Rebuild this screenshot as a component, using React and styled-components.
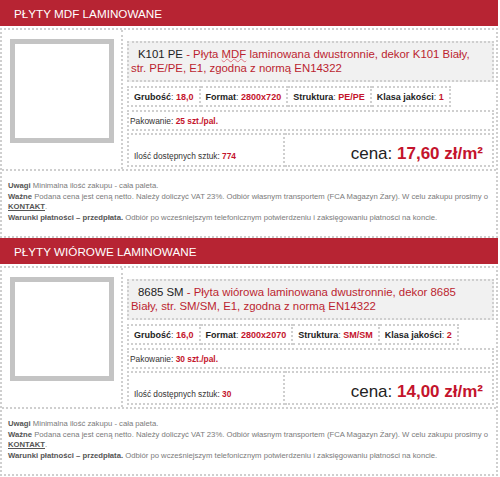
import styled, { createGlobalStyle } from 'styled-components';

const RED = '#b72433';
const VALUE_RED = '#c4142c';
const DOTS = '2px dotted #cfcfcf';

const GlobalStyle = createGlobalStyle`
	body {
		margin: 0;
		background: #fff;
		font-family: "Liberation Sans", Arial, sans-serif;
	}
	* {
		box-sizing: border-box;
	}
`;

const Page = styled.div`
	width: 498px;
`;

const Header = styled.div`
	height: 26px;
	display: flex;
	align-items: center;
	padding: 1px 0 0 14px;
	background: ${RED};
	color: #fff;
	font-size: 11.7px;
`;

const Panel = styled.div`
	margin-top: 2px;
	border: ${DOTS};
`;

const ProductRow = styled.div`
	display: flex;
	height: 141px;
	border-bottom: ${DOTS};
`;

const ImageCell = styled.div`
	width: 121px;
	padding: 9px 0 0 8px;
	border-right: ${DOTS};
`;

const ImageFrame = styled.div`
	width: 104px;
	height: 104px;
	border: 5px solid #c4c4c4;
	background: #fff;
`;

const InfoCell = styled.div`
	flex: 1;
	display: flex;
	flex-direction: column;
	padding: 11px 2px 0 4px;
`;

const TitleBox = styled.div`
	height: 41px;
	padding: 5px 6px 0 2px;
	border: ${DOTS};
	background: #f1f1f1;
	font-size: 11.4px;
	line-height: 13.5px;
	text-indent: 7px;
	color: #bb1f30;
`;

const Code = styled.span`
	color: #222;
`;

const Squiggle = styled.span`
	text-decoration-line: underline;
	text-decoration-style: wavy;
	text-decoration-color: #e27382;
	text-decoration-thickness: 1px;
	text-underline-offset: 0;
`;

const SpecsRow = styled.div`
	display: flex;
	height: 21px;
	margin-top: 4px;
`;

const SpecCell = styled.div`
	display: flex;
	align-items: center;
	padding: 0 5px;
	border: ${DOTS};
	font-size: 9px;
	color: #222;

	& + & {
		border-left: none;
	}
`;

const Label = styled.b`
	font-weight: bold;
`;

const Colon = styled.span`
	color: #555;
	white-space: pre;
`;

const Value = styled.b`
	font-weight: bold;
	color: ${VALUE_RED};
`;

const PackRow = styled.div`
	display: flex;
	align-items: center;
	height: 21px;
	margin-top: 3px;
	padding-left: 1px;
	border: ${DOTS};
	font-size: 8.4px;
	color: #333;
`;

const StockRow = styled.div`
	display: flex;
	height: 34px;
	margin-top: 2px;
`;

const StockCell = styled.div`
	width: 158px;
	display: flex;
	align-items: flex-end;
	padding: 0 0 4px 5px;
	border: ${DOTS};
	font-size: 8.3px;
	line-height: 10px;
	color: #333;
`;

const PriceCell = styled.div`
	flex: 1;
	display: flex;
	align-items: flex-end;
	justify-content: flex-end;
	padding: 0 9px 1px 0;
	border: ${DOTS};
	border-left: none;
	font-size: 17px;
	line-height: 20px;
	color: #222;
`;

const Notes = styled.div`
	padding: 10px 0 13px 6px;
	font-size: 7.7px;
	line-height: 10.5px;
	color: #7a7a7a;
`;

const NoteLine = styled.div``;

const Strong = styled.b`
	color: #555;
`;

const Contact = styled.a`
	color: #555;
	font-weight: bold;
	text-decoration: underline;
`;

const products = [
	{
		section: 'PŁYTY MDF LAMINOWANE',
		code: 'K101 PE',
		desc: (
			<>
				{' - Płyta '}
				<Squiggle>MDF</Squiggle>
				{' laminowana dwustronnie, dekor K101 Biały, str. PE/PE, E1, zgodna z normą EN14322'}
			</>
		),
		thickness: '18,0',
		format: '2800x720',
		structure: 'PE/PE',
		grade: '1',
		pack: '25 szt./pal.',
		stock: '774',
		price: '17,60 zł/m²'
	},
	{
		section: 'PŁYTY WIÓROWE LAMINOWANE',
		code: '8685 SM',
		desc: ' - Płyta wiórowa laminowana dwustronnie, dekor 8685 Biały, str. SM/SM, E1, zgodna z normą EN14322',
		thickness: '16,0',
		format: '2800x2070',
		structure: 'SM/SM',
		grade: '2',
		pack: '30 szt./pal.',
		stock: '30',
		price: '14,00 zł/m²'
	}
];

const Spec = ({ label, value }) => (
	<SpecCell>
		<Label>{label}</Label>
		<Colon>: </Colon>
		<Value>{value}</Value>
	</SpecCell>
);

const ProductSection = ({ product }) => (
	<section>
		<Header>{product.section}</Header>
		<Panel>
			<ProductRow>
				<ImageCell>
					<ImageFrame />
				</ImageCell>
				<InfoCell>
					<TitleBox>
						<Code>{product.code}</Code>
						{product.desc}
					</TitleBox>
					<SpecsRow>
						<Spec label="Grubość" value={product.thickness} />
						<Spec label="Format" value={product.format} />
						<Spec label="Struktura" value={product.structure} />
						<Spec label="Klasa jakości" value={product.grade} />
					</SpecsRow>
					<PackRow>
						Pakowanie:&nbsp;<Value>{product.pack}</Value>
					</PackRow>
					<StockRow>
						<StockCell>
							<span>
								Ilość dostępnych sztuk: <Value>{product.stock}</Value>
							</span>
						</StockCell>
						<PriceCell>
							<span>
								cena: <Value>{product.price}</Value>
							</span>
						</PriceCell>
					</StockRow>
				</InfoCell>
			</ProductRow>
			<Notes>
				<NoteLine>
					<Strong>Uwagi</Strong> Minimalna ilość zakupu - cała paleta.
				</NoteLine>
				<NoteLine>
					<Strong>Ważne</Strong> Podana cena jest ceną netto. Należy doliczyć VAT 23%. Odbiór
					własnym transportem (FCA Magazyn Żary). W celu zakupu prosimy o{' '}
					<Contact>KONTAKT</Contact>.
				</NoteLine>
				<NoteLine>
					<Strong>Warunki płatności – przedpłata.</Strong> Odbiór po wcześniejszym telefonicznym
					potwierdzeniu i zaksięgowaniu płatności na koncie.
				</NoteLine>
			</Notes>
		</Panel>
	</section>
);

const App = () => (
	<>
		<GlobalStyle />
		<Page>
			{products.map((product) => (
				<ProductSection key={product.code} product={product} />
			))}
		</Page>
	</>
);

export default App;
